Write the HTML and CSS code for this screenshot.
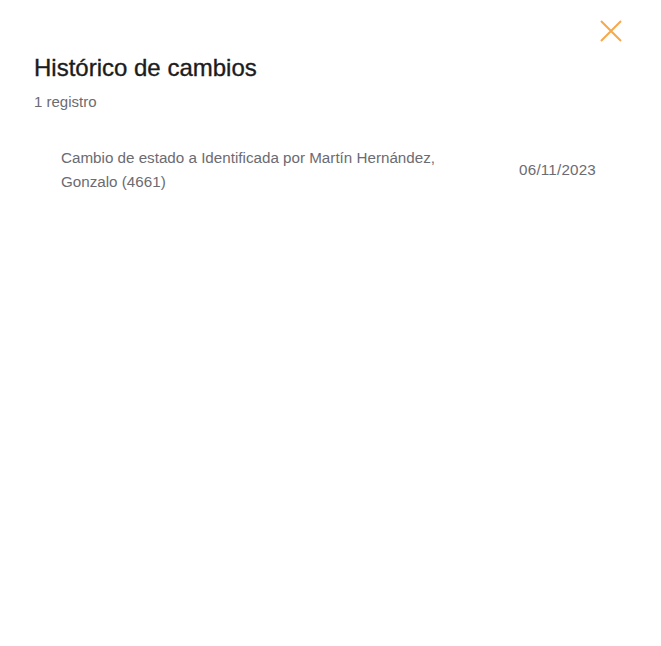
FILE: index.html
```html
<!DOCTYPE html>
<html lang="es">
<head>
<meta charset="utf-8">
<title>Histórico de cambios</title>
<link rel="stylesheet" href="styles.css">
</head>
<body>
<div class="modal">
  <button class="close" aria-label="Cerrar">
    <svg width="24" height="24" viewBox="0 0 24 24"><path d="M2 2 L22 22 M22 2 L2 22" stroke="#f7a84a" stroke-width="2" fill="none"/></svg>
  </button>
  <h1 class="title">Histórico de cambios</h1>
  <div class="count">1 registro</div>
  <ul class="list">
    <li class="row">
      <span class="desc">Cambio de estado a Identificada por Martín Hernández, Gonzalo (4661)</span>
      <span class="date">06/11/2023</span>
    </li>
  </ul>
</div>
</body>
</html>
```
FILE: styles.css
```css
html, body { margin: 0; padding: 0; background: #fff; }
body { font-family: "Liberation Sans", Arial, sans-serif; }
.modal { position: relative; padding: 52px 34px 0 34px; }
.close { position: absolute; top: 19px; left: 599px; background: none; border: 0; padding: 0; cursor: pointer; width: 24px; height: 24px; }
.close svg { display: block; }
.title { margin: 0; font-size: 24px; font-weight: normal; color: #1c1c1e; line-height: 32px; -webkit-text-stroke: 0.35px #1c1c1e; }
.count { margin-top: 8px; font-size: 15px; color: #6b6b72; line-height: 20px; }
.list { list-style: none; margin: 34px 0 0 0; padding: 0 31px 0 27px; }
.row { display: flex; justify-content: space-between; align-items: center; gap: 40px; }
.desc { font-size: 15.2px; line-height: 24px; color: #6b6b72; max-width: 390px; }
.date { font-size: 15.2px; line-height: 24px; color: #6b6b72; letter-spacing: 0.2px; }
```
